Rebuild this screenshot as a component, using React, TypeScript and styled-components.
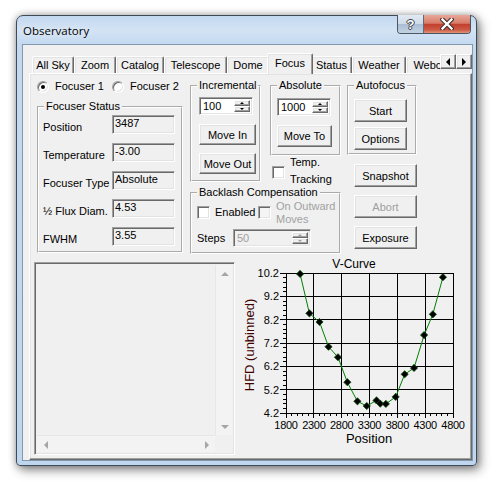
import React from 'react';
import styled, { createGlobalStyle } from 'styled-components';

const UI_FONT = '"Liberation Sans", Arial, sans-serif';

const GlobalStyle = createGlobalStyle`
  html, body {
    margin: 0;
    padding: 0;
    background: #ffffff;
  }
  body {
    font-family: ${UI_FONT};
    font-size: 11px;
    color: #000;
  }
  * {
    box-sizing: border-box;
  }
`;

const Desktop = styled.div`
  width: 497px;
  height: 482px;
  padding: 15px 0 0 16px;
  overflow: hidden;
`;

const Window = styled.div`
  width: 461px;
  height: 451px;
  display: flex;
  flex-direction: column;
  border: 1px solid #3f4a57;
  border-radius: 7px 7px 4px 4px;
  background: linear-gradient(180deg, #c3d8ef 0px, #d3e3f4 14px, #c4d9f0 28px, #bfd6ef 100%);
  box-shadow: 0 0 7px rgba(0, 0, 0, 0.28), 3px 4px 11px rgba(0, 0, 0, 0.45);
`;

const TitleBar = styled.div`
  height: 28px;
  flex: none;
  display: flex;
  align-items: flex-start;
  padding-left: 6px;
`;

const Title = styled.span`
  align-self: center;
  flex: 1;
  font-family: "Open Sans", "Liberation Sans", sans-serif;
  font-size: 11.5px;
  color: #000;
  text-shadow: 0 0 6px rgba(255, 255, 255, 0.9);
`;

const CaptionButtons = styled.div`
  display: flex;
  height: 19px;
  margin-right: 5px;
  margin-top: -1px;
  border: 1px solid #4b5663;
  border-top: none;
  border-radius: 0 0 4px 4px;
  overflow: hidden;
`;

const HelpButton = styled.div`
  width: 26px;
  display: flex;
  align-items: center;
  justify-content: center;
  border-right: 1px solid #5d6b7c;
  background: linear-gradient(180deg, #e2eaf3 0%, #cfdbe8 48%, #aabdd3 52%, #c3d3e5 100%);
  color: #fff;
  font: bold 13px ${UI_FONT};
  text-shadow: 1px 0 #3a3f46, -1px 0 #3a3f46, 0 1px #3a3f46, 0 -1px #3a3f46;
`;

const CloseButton = styled.div`
  width: 46px;
  display: flex;
  align-items: center;
  justify-content: center;
  background: linear-gradient(180deg, #e8a899 0%, #d77a68 46%, #c2402e 52%, #cc5a44 82%, #e39277 100%);
`;

const Client = styled.div`
  flex: 1;
  display: flex;
  flex-direction: column;
  margin: 0 3px 4px 5px;
  border: 1px solid #8397ad;
  background: #f0f0f0;
`;

const TabControl = styled.div`
  flex: 1;
  display: flex;
  flex-direction: column;
  margin: 8px 0 0 6px;
`;

const TabStrip = styled.div`
  height: 20px;
  flex: none;
  display: flex;
  align-items: flex-start;
`;

const TabViewport = styled.div`
  width: 411px;
  height: 21px;
  margin-bottom: -1px;
  flex: none;
  display: flex;
  align-items: flex-end;
  padding-left: 3px;
  overflow: hidden;
`;

const Tab = styled.div<{ $w: number; $active?: boolean }>`
  flex: none;
  position: relative;
  z-index: ${p => (p.$active ? 2 : 1)};
  width: ${p => (p.$active ? p.$w + 4 : p.$w)}px;
  height: ${p => (p.$active ? 21 : 17)}px;
  margin: 0 ${p => (p.$active ? -2 : 0)}px ${p => (p.$active ? 0 : 1)}px;
  padding-top: ${p => (p.$active ? 2 : 1)}px;
  background: #f0f0f0;
  border-style: solid;
  border-width: 1px 1px 0 1px;
  border-color: #ffffff #696969 transparent #ffffff;
  border-radius: 2px 2px 0 0;
  box-shadow: inset -1px 0 #a0a0a0, inset 1px 1px #e3e3e3;
  line-height: 15px;
  text-align: center;
  white-space: nowrap;
`;

const TabScroll = styled.div`
  display: flex;
  margin-top: 1px;
`;

const RaisedBox = styled.div`
  background: #f0f0f0;
  border: 1px solid;
  border-color: #ffffff #696969 #696969 #ffffff;
  box-shadow: inset -1px -1px #a0a0a0, inset 1px 1px #e3e3e3;
`;

const ScrollButton = styled(RaisedBox)`
  width: 16px;
  height: 15px;
  display: flex;
  align-items: center;
  justify-content: center;
`;

const Arrow = styled.span<{ $dir: 'left' | 'right' | 'up' | 'down'; $size?: number; $color?: string }>`
  width: 0;
  height: 0;
  border: ${p => p.$size ?? 4}px solid transparent;
  ${p => {
    const s = p.$size ?? 4;
    const c = p.$color ?? '#000';
    switch (p.$dir) {
      case 'left':
        return `border-right: ${s}px solid ${c}; border-left-width: 0;`;
      case 'right':
        return `border-left: ${s}px solid ${c}; border-right-width: 0;`;
      case 'up':
        return `border-bottom: ${s}px solid ${c}; border-top-width: 0;`;
      default:
        return `border-top: ${s}px solid ${c}; border-bottom-width: 0;`;
    }
  }}
`;

const TabPanel = styled.div`
  flex: 1;
  display: flex;
  flex-direction: column;
  padding-left: 4px;
  border: 1px solid;
  border-color: #ffffff #696969 #696969 #ffffff;
  box-shadow: inset -1px -1px #a0a0a0, inset 1px 1px #e3e3e3;
`;

const TopArea = styled.div`
  display: flex;
  align-items: flex-start;
  padding-left: 3px;
`;

const Column = styled.div<{ $w: number; $ml?: number; $mt?: number }>`
  width: ${p => p.$w}px;
  flex: none;
  display: flex;
  flex-direction: column;
  align-items: flex-start;
  margin-left: ${p => p.$ml ?? 0}px;
  margin-top: ${p => p.$mt ?? 0}px;
`;

const RadioRow = styled.div`
  display: flex;
  height: 13px;
  margin-top: 6px;
`;

const RadioItem = styled.label<{ $w?: number }>`
  display: flex;
  align-items: center;
  gap: 6px;
  width: ${p => (p.$w ? `${p.$w}px` : 'auto')};
  line-height: 13px;
  white-space: nowrap;
`;

const Radio = styled.span<{ $checked?: boolean }>`
  width: 12px;
  height: 12px;
  flex: none;
  display: flex;
  align-items: center;
  justify-content: center;
  border-radius: 50%;
  border: 1px solid;
  border-color: #a0a0a0 #ffffff #ffffff #a0a0a0;
  box-shadow: inset 1px 1px #696969, inset -1px -1px #e3e3e3;
  background: #ffffff;

  &::after {
    content: '';
    width: 4px;
    height: 4px;
    border-radius: 50%;
    background: ${p => (p.$checked ? '#000' : 'transparent')};
  }
`;

const Group = styled.fieldset<{ $w: number; $h: number; $mt?: number; $ml?: number }>`
  width: ${p => p.$w}px;
  height: ${p => p.$h}px;
  min-width: 0;
  flex: none;
  margin: ${p => p.$mt ?? 0}px 0 0 ${p => p.$ml ?? 0}px;
  padding: 0;
  border: 2px groove #ffffff;
`;

const Caption = styled.legend`
  margin-left: 5px;
  padding: 0 2px;
  line-height: 13px;
  font-size: 11px;
  white-space: nowrap;
`;

const GroupBody = styled.div<{ $pt: number; $pl: number; $gap?: number }>`
  display: flex;
  flex-direction: column;
  align-items: flex-start;
  gap: ${p => p.$gap ?? 0}px;
  padding: ${p => p.$pt}px 0 0 ${p => p.$pl}px;
`;

const StatusGrid = styled.div`
  display: grid;
  grid-template-columns: 69px 63px;
  row-gap: 9px;
  align-items: end;
`;

const FieldLabel = styled.span`
  line-height: 14px;
  white-space: nowrap;
`;

const SunkenBox = styled.div<{ $bg?: string }>`
  border: 1px solid;
  border-color: #a0a0a0 #ffffff #ffffff #a0a0a0;
  box-shadow: inset 1px 1px #696969, inset -1px -1px #e3e3e3;
  background: ${p => p.$bg ?? '#ffffff'};
`;

const ReadOnlyField = styled(SunkenBox)`
  width: 63px;
  height: 19px;
  padding: 1px 0 0 2px;
  line-height: 13px;
  white-space: nowrap;
`;

const SpinBox = styled(SunkenBox)<{ $w: number }>`
  width: ${p => p.$w}px;
  height: 18px;
  display: flex;
  padding: 2px 2px 2px 3px;
`;

const SpinValue = styled.span<{ $disabled?: boolean }>`
  flex: 1;
  line-height: 12px;
  color: ${p => (p.$disabled ? '#a0a0a0' : '#000')};
`;

const SpinButtons = styled.div`
  width: 16px;
  display: flex;
  flex-direction: column;
`;

const SpinButton = styled(RaisedBox)`
  flex: 1;
  display: flex;
  align-items: center;
  justify-content: center;
`;

const PushButton = styled.button<{ $w: number; $h?: number; $mt?: number; $ml?: number }>`
  width: ${p => p.$w}px;
  height: ${p => p.$h ?? 23}px;
  margin: ${p => p.$mt ?? 0}px 0 0 ${p => p.$ml ?? 0}px;
  padding: 0;
  flex: none;
  font: 11px ${UI_FONT};
  color: ${p => (p.disabled ? '#a0a0a0' : '#000')};
  background: #f0f0f0;
  border: 1px solid;
  border-color: #ffffff #696969 #696969 #ffffff;
  box-shadow: inset -1px -1px #a0a0a0, inset 1px 1px #e3e3e3;
  white-space: nowrap;
`;

const CheckItem = styled.label<{ $w?: number; $mt?: number; $align?: string; $pl?: number; $h?: number }>`
  display: flex;
  align-items: ${p => p.$align ?? 'center'};
  gap: 5px;
  width: ${p => (p.$w ? `${p.$w}px` : 'auto')};
  height: ${p => (p.$h ? `${p.$h}px` : 'auto')};
  margin-top: ${p => p.$mt ?? 0}px;
  padding-left: ${p => p.$pl ?? 0}px;
  flex: none;
`;

const CheckBox = styled(SunkenBox)<{ $mt?: number }>`
  width: 13px;
  height: 13px;
  flex: none;
  margin-top: ${p => p.$mt ?? 0}px;
`;

const CheckText = styled.span<{ $disabled?: boolean; $lh?: number }>`
  line-height: ${p => p.$lh ?? 13}px;
  white-space: nowrap;
  color: ${p => (p.$disabled ? '#a0a0a0' : '#000')};
`;

const Row = styled.div<{ $mt?: number }>`
  display: flex;
  align-items: flex-start;
  margin-top: ${p => p.$mt ?? 0}px;
`;

const StepsRow = styled.div`
  display: flex;
  align-items: center;
  margin-top: 3px;
`;

const StepsLabel = styled.span`
  width: 36px;
  line-height: 13px;
`;

const BottomArea = styled.div`
  display: flex;
  align-items: flex-start;
`;

const ListBox = styled.div`
  width: 201px;
  height: 193px;
  margin-top: 8px;
  flex: none;
  display: grid;
  grid-template-columns: 1fr 17px;
  grid-template-rows: 1fr 17px;
  border: 1px solid;
  border-color: #a0a0a0 #ffffff #ffffff #a0a0a0;
  box-shadow: inset 1px 1px #696969, inset -1px -1px #e3e3e3;
  padding: 2px;
  background: #f0f0f0;
`;

const ListContent = styled.div`
  background: #f0f0f0;
`;

const VScroll = styled.div`
  display: flex;
  flex-direction: column;
  justify-content: space-between;
  background: #f3f3f3;
  border-left: 1px solid #e6e6e6;
`;

const HScroll = styled.div`
  display: flex;
  justify-content: space-between;
  background: #f3f3f3;
  border-top: 1px solid #e6e6e6;
`;

const ScrollCorner = styled.div`
  background: #f0f0f0;
`;

const ScrollArrowCell = styled.div`
  width: 17px;
  height: 17px;
  display: flex;
  align-items: center;
  justify-content: center;
`;

const ChartSvg = styled.svg`
  flex: none;
  display: block;
`;

const TABS = [
  { label: 'All Sky', w: 42 },
  { label: 'Zoom', w: 42 },
  { label: 'Catalog', w: 48 },
  { label: 'Telescope', w: 63 },
  { label: 'Dome', w: 42 },
  { label: 'Focus', w: 42, active: true },
  { label: 'Status', w: 41 },
  { label: 'Weather', w: 54 },
  { label: 'Webcam', w: 58 },
];

const STATUS = [
  { label: 'Position', value: '3487' },
  { label: 'Temperature', value: '-3.00' },
  { label: 'Focuser Type', value: 'Absolute' },
  { label: '½ Flux Diam.', value: '4.53' },
  { label: 'FWHM', value: '3.55' },
];

const VCURVE: [number, number][] = [
  [2053, 10.16], [2221, 8.47], [2402, 8.1], [2564, 7.04], [2734, 6.59], [2902, 5.52],
  [3083, 4.7], [3251, 4.5], [3426, 4.74], [3493, 4.6], [3594, 4.59], [3770, 4.89],
  [3932, 5.86], [4100, 6.13], [4281, 7.54], [4438, 8.43], [4619, 10.02],
];

const PLOT = { left: 51, right: 218, top: 19, bottom: 159 };
const X_MIN = 1800;
const X_MAX = 4800;
const Y_MIN = 4.2;
const Y_MAX = 10.2;

const sx = (v: number) => PLOT.left + ((v - X_MIN) / (X_MAX - X_MIN)) * (PLOT.right - PLOT.left);
const sy = (v: number) => PLOT.bottom - ((v - Y_MIN) / (Y_MAX - Y_MIN)) * (PLOT.bottom - PLOT.top);

function Spin({ value, w, disabled }: { value: string; w: number; disabled?: boolean }) {
  const c = disabled ? '#a0a0a0' : '#000';
  return (
    <SpinBox $w={w} $bg={disabled ? '#f0f0f0' : '#ffffff'}>
      <SpinValue $disabled={disabled}>{value}</SpinValue>
      <SpinButtons>
        <SpinButton><Arrow $dir="up" $size={2} $color={c} /></SpinButton>
        <SpinButton><Arrow $dir="down" $size={2} $color={c} /></SpinButton>
      </SpinButtons>
    </SpinBox>
  );
}

function VCurveChart() {
  const xMajors = [1800, 2300, 2800, 3300, 3800, 4300, 4800];
  const yMajors = [4.2, 5.2, 6.2, 7.2, 8.2, 9.2, 10.2];
  const xMinors: number[] = [];
  for (let v = X_MIN; v <= X_MAX; v += 100) xMinors.push(v);
  const yMinors: number[] = [];
  for (let i = 0; i <= 30; i++) yMinors.push(Y_MIN + i * 0.2);
  const line = VCURVE.map(([x, y]) => `${sx(x).toFixed(1)},${sy(y).toFixed(1)}`).join(' ');

  return (
    <ChartSvg width={236} height={196} viewBox="0 0 236 196" fontFamily={UI_FONT}>
      <text x={119} y={14} fontSize={12} textAnchor="middle" fill="#000">V-Curve</text>
      <g stroke="#000" strokeWidth={1} shapeRendering="crispEdges">
        {xMajors.map(v => (
          <line key={`gx${v}`} x1={sx(v)} y1={PLOT.top} x2={sx(v)} y2={PLOT.bottom + 5} />
        ))}
        {yMajors.map(v => (
          <line key={`gy${v}`} x1={PLOT.left - 6} y1={sy(v)} x2={PLOT.right} y2={sy(v)} />
        ))}
        {xMinors.map(v => (
          <line key={`mx${v}`} x1={sx(v)} y1={PLOT.bottom} x2={sx(v)} y2={PLOT.bottom + 3} />
        ))}
        {yMinors.map(v => (
          <line key={`my${v.toFixed(1)}`} x1={PLOT.left - 3} y1={sy(v)} x2={PLOT.left} y2={sy(v)} />
        ))}
      </g>
      <g fontSize={11} fill="#000">
        {yMajors.map(v => (
          <text key={`ly${v}`} x={44} y={sy(v) + 4} textAnchor="end">{v.toFixed(1)}</text>
        ))}
        {xMajors.map(v => (
          <text key={`lx${v}`} x={sx(v)} y={175} textAnchor="middle" letterSpacing={-0.3}>{v}</text>
        ))}
      </g>
      <text x={134} y={189} fontSize={13} textAnchor="middle" fill="#000">Position</text>
      <text x={19} y={91} fontSize={13} textAnchor="middle" fill="#400000" transform="rotate(-90 19 91)">
        HFD (unbinned)
      </text>
      <polyline points={line} fill="none" stroke="#008000" strokeWidth={1} />
      {VCURVE.map(([x, y]) => {
        const cx = sx(x);
        const cy = sy(y);
        return (
          <polygon
            key={x}
            points={`${cx},${cy - 3.6} ${cx + 3.6},${cy} ${cx},${cy + 3.6} ${cx - 3.6},${cy}`}
            fill="#000"
            stroke="#0b4a0b"
            strokeWidth={0.8}
          />
        );
      })}
    </ChartSvg>
  );
}

export default function App() {
  return (
    <>
      <GlobalStyle />
      <Desktop>
        <Window>
          <TitleBar>
            <Title>Observatory</Title>
            <CaptionButtons>
              <HelpButton>?</HelpButton>
              <CloseButton>
                <svg width="14" height="12" viewBox="0 0 14 12">
                  <path d="M2.5 1.5 L11.5 10.5 M11.5 1.5 L2.5 10.5" stroke="#3b2a28" strokeWidth="4.4" strokeLinecap="square" />
                  <path d="M2.5 1.5 L11.5 10.5 M11.5 1.5 L2.5 10.5" stroke="#ffffff" strokeWidth="2.4" strokeLinecap="square" />
                </svg>
              </CloseButton>
            </CaptionButtons>
          </TitleBar>
          <Client>
            <TabControl>
              <TabStrip>
                <TabViewport>
                  {TABS.map(t => (
                    <Tab key={t.label} $w={t.w} $active={t.active}>{t.label}</Tab>
                  ))}
                </TabViewport>
                <TabScroll>
                  <ScrollButton><Arrow $dir="left" $size={4} /></ScrollButton>
                  <ScrollButton><Arrow $dir="right" $size={4} /></ScrollButton>
                </TabScroll>
              </TabStrip>
              <TabPanel>
                <TopArea>
                  <Column $w={146}>
                    <RadioRow>
                      <RadioItem $w={75}><Radio $checked />Focuser 1</RadioItem>
                      <RadioItem><Radio />Focuser 2</RadioItem>
                    </RadioRow>
                    <Group $w={146} $h={153} $mt={7}>
                      <Caption>Focuser Status</Caption>
                      <GroupBody $pt={2} $pl={4}>
                        <StatusGrid>
                          {STATUS.map(s => (
                            <React.Fragment key={s.label}>
                              <FieldLabel>{s.label}</FieldLabel>
                              <ReadOnlyField $bg="#f0f0f0">{s.value}</ReadOnlyField>
                            </React.Fragment>
                          ))}
                        </StatusGrid>
                      </GroupBody>
                    </Group>
                  </Column>

                  <Column $w={151} $ml={7} $mt={5}>
                    <Row>
                      <Group $w={71} $h={103}>
                        <Caption>Incremental</Caption>
                        <GroupBody $pt={5} $pl={7}>
                          <Spin value="100" w={54} />
                          <PushButton $w={57} $h={21} $mt={9}>Move In</PushButton>
                          <PushButton $w={57} $h={21} $mt={8}>Move Out</PushButton>
                        </GroupBody>
                      </Group>
                      <Column $w={71} $ml={9}>
                        <Group $w={71} $h={77}>
                          <Caption>Absolute</Caption>
                          <GroupBody $pt={6} $pl={5}>
                            <Spin value="1000" w={54} />
                            <PushButton $w={55} $h={22} $mt={9}>Move To</PushButton>
                          </GroupBody>
                        </Group>
                        <CheckItem $align="flex-start" $mt={-2} $pl={2} $h={30}>
                          <CheckBox $mt={12} />
                          <CheckText $lh={16.5}>Temp.<br />Tracking</CheckText>
                        </CheckItem>
                      </Column>
                    </Row>
                    <Group $w={151} $h={68} $mt={2}>
                      <Caption>Backlash Compensation</Caption>
                      <GroupBody $pt={1} $pl={5}>
                        <Row>
                          <CheckItem $w={61} $mt={6} $h={13}>
                            <CheckBox />
                            <CheckText>Enabled</CheckText>
                          </CheckItem>
                          <CheckItem $align="flex-start" $h={26}>
                            <CheckBox $mt={6} $bg="#f4f4f4" />
                            <CheckText $disabled>On Outward<br />Moves</CheckText>
                          </CheckItem>
                        </Row>
                        <StepsRow>
                          <StepsLabel>Steps</StepsLabel>
                          <Spin value="50" w={78} disabled />
                        </StepsRow>
                      </GroupBody>
                    </Group>
                  </Column>

                  <Column $w={70} $ml={6} $mt={5}>
                    <Group $w={70} $h={76}>
                      <Caption>Autofocus</Caption>
                      <GroupBody $pt={7} $pl={5} $gap={5}>
                        <PushButton $w={53}>Start</PushButton>
                        <PushButton $w={53}>Options</PushButton>
                      </GroupBody>
                    </Group>
                    <PushButton $w={63} $ml={7} $mt={9}>Snapshot</PushButton>
                    <PushButton $w={63} $ml={7} $mt={8} disabled>Abort</PushButton>
                    <PushButton $w={63} $ml={7} $mt={8}>Exposure</PushButton>
                  </Column>
                </TopArea>

                <BottomArea>
                  <ListBox>
                    <ListContent />
                    <VScroll>
                      <ScrollArrowCell><Arrow $dir="up" $size={4} $color="#a6a6a6" /></ScrollArrowCell>
                      <ScrollArrowCell><Arrow $dir="down" $size={4} $color="#a6a6a6" /></ScrollArrowCell>
                    </VScroll>
                    <HScroll>
                      <ScrollArrowCell><Arrow $dir="left" $size={4} $color="#a6a6a6" /></ScrollArrowCell>
                      <ScrollArrowCell><Arrow $dir="right" $size={4} $color="#a6a6a6" /></ScrollArrowCell>
                    </HScroll>
                    <ScrollCorner />
                  </ListBox>
                  <VCurveChart />
                </BottomArea>
              </TabPanel>
            </TabControl>
          </Client>
        </Window>
      </Desktop>
    </>
  );
}
